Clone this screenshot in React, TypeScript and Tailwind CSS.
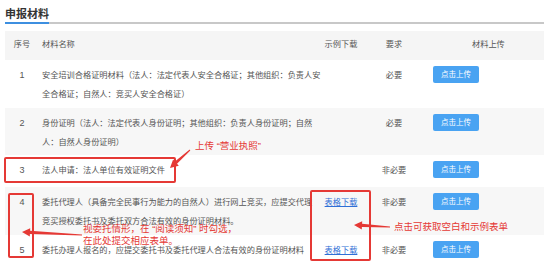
import React from 'react';

interface Row {
  no: string;
  lines: string[];
  sample: boolean;
  need: string;
  h: string;
  bg: string;
}

const rows: Row[] = [
  {
    no: '1',
    lines: ['安全培训合格证明材料（法人：法定代表人安全合格证；其他组织：负责人安', '全合格证；自然人：竞买人安全合格证）'],
    sample: false,
    need: '必要',
    h: 'h-[48px]',
    bg: 'bg-white',
  },
  {
    no: '2',
    lines: ['身份证明（法人：法定代表人身份证明；其他组织：负责人身份证明；自然', '人：自然人身份证明）'],
    sample: false,
    need: '必要',
    h: 'h-[47px]',
    bg: 'bg-[#f7f7f7]',
  },
  {
    no: '3',
    lines: ['法人申请：法人单位有效证明文件'],
    sample: false,
    need: '非必要',
    h: 'h-[32px]',
    bg: 'bg-white',
  },
  {
    no: '4',
    lines: ['委托代理人（具备完全民事行为能力的自然人）进行网上竞买，应提交代理', '竞买授权委托书及委托双方合法有效的身份证明材料。'],
    sample: true,
    need: '非必要',
    h: 'h-[48px]',
    bg: 'bg-[#f7f7f7]',
  },
  {
    no: '5',
    lines: ['委托办理人报名的，应提交委托书及委托代理人合法有效的身份证明材料'],
    sample: true,
    need: '非必要',
    h: 'h-[36px]',
    bg: 'bg-white',
  },
];

// tapered annotation arrow, tail -> tip
const arrow = (tx: number, ty: number, px: number, py: number) => {
  const len = Math.hypot(px - tx, py - ty);
  const dx = (px - tx) / len;
  const dy = (py - ty) / len;
  const nx = -dy;
  const ny = dx;
  const bx = px - dx * 8;
  const by = py - dy * 8;
  const pts = [
    [tx + nx * 0.5, ty + ny * 0.5],
    [bx + nx * 1.6, by + ny * 1.6],
    [bx + nx * 4.2, by + ny * 4.2],
    [px, py],
    [bx - nx * 4.2, by - ny * 4.2],
    [bx - nx * 1.6, by - ny * 1.6],
    [tx - nx * 0.5, ty - ny * 0.5],
  ];
  return pts.map(p => p[0].toFixed(1) + ',' + p[1].toFixed(1)).join(' ');
};

const App: React.FC = () => {
  return (
    <div className="relative w-[554px] h-[271px] overflow-hidden bg-white font-['Liberation_Sans','Noto_Sans_CJK_SC',sans-serif] text-[#555]">
      <div className="ml-[5px] w-[539px]">
        {/* title */}
        <div className="flex border-b-2 border-[#c8c8c8]">
          <span className="inline-block -mb-[2px] pt-[7px] pb-[1px] leading-[14px] text-[11px] font-bold text-[#333] border-b-2 border-[#3d8fe0]">
            申报材料
          </span>
        </div>

        {/* header */}
        <div className="mt-[7px] flex h-[29px] items-center bg-[#f5f5f5] text-[8.2px]">
          <div className="w-[34px] text-center">序号</div>
          <div className="w-[272px] pl-[3px]">材料名称</div>
          <div className="w-[60px] text-center">示例下载</div>
          <div className="w-[46px] text-center">要求</div>
          <div className="pl-[55px]">材料上传</div>
        </div>

        {rows.map(r => (
          <div key={r.no} className={`flex items-start pt-[6px] text-[8.2px] leading-[19px] ${r.h} ${r.bg}`}>
            <div className="w-[34px] text-center text-[9px]">{r.no}</div>
            <div className="w-[272px] pl-[3px] whitespace-nowrap">
              {r.lines.map((l, i) => (
                <div key={i}>{l}</div>
              ))}
            </div>
            <div className="w-[60px] text-center">
              {r.sample && <span className="text-[#2f6fd6] underline">表格下载</span>}
            </div>
            <div className="w-[46px] text-center">{r.need}</div>
            <div className="pl-[16px]">
              <button className="flex h-[17px] w-[46px] items-center justify-center rounded-[2px] bg-[#49a3f2] text-[7.5px] leading-none text-white">
                点击上传
              </button>
            </div>
          </div>
        ))}
      </div>

      {/* annotations */}
      <div className="absolute left-[4px] top-[157px] h-[26px] w-[172px] rounded-[2px] border-2 border-[#e53935]" />
      <div className="absolute left-[8px] top-[193px] h-[65px] w-[26px] rounded-[2px] border-2 border-[#e53935]" />
      <div className="absolute left-[310px] top-[190px] h-[71px] w-[61px] rounded-[2px] border-2 border-[#e53935]" />

      <div className="absolute left-[195px] top-[140px] text-[9.5px] leading-[12px] text-[#e53935] whitespace-nowrap">
        上传 “营业执照”
      </div>
      <div className="absolute left-[83px] top-[223px] text-[9.5px] leading-[12px] text-[#e53935] whitespace-nowrap">
        <div>视委托情形，在 “阅读须知” 时勾选，</div>
        <div>在此处提交相应表单。</div>
      </div>
      <div className="absolute left-[394px] top-[221px] text-[9.5px] leading-[12px] text-[#e53935] whitespace-nowrap">
        点击可获取空白和示例表单
      </div>

      <svg className="pointer-events-none absolute left-0 top-0" width="554" height="271">
        <polygon points={arrow(190, 150, 170, 168)} fill="#e53935" />
        <polygon points={arrow(82, 235, 22, 232)} fill="#e53935" />
        <polygon points={arrow(390, 227, 354, 225)} fill="#e53935" />
      </svg>
    </div>
  );
};

export default App;
